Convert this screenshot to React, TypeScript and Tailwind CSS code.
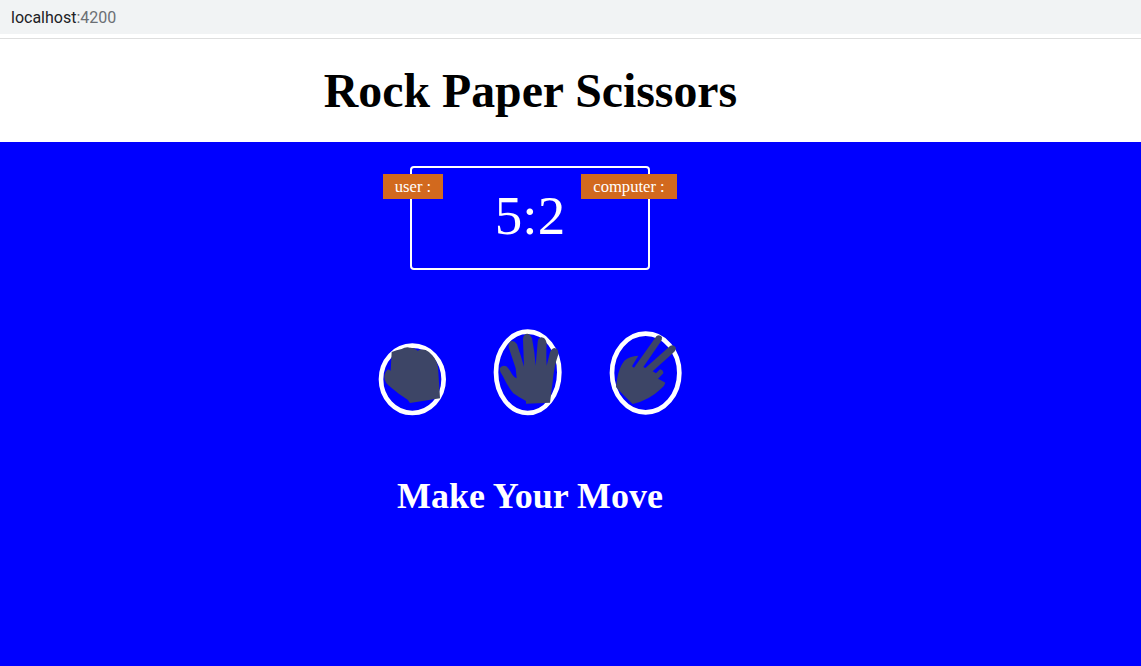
import React from 'react';

const serif = "font-['Liberation_Serif','Times_New_Roman',serif]";
const handColor = '#3d4566';

export default function App() {
  return (
    <div className={`h-[666px] w-[1141px] overflow-hidden bg-white flex flex-col ${serif}`}>
      {/* Browser address bar */}
      <div className="h-[34px] bg-[#f1f3f4] pl-[11px] flex items-center font-['Roboto',sans-serif] text-[16px] text-[#202124] pt-[2px]">
        localhost<span className="text-[#6b6f74]">:4200</span>
      </div>
      <div className="h-[5px] border-b-[1.5px] border-[#dedede] bg-white"></div>

      {/* Title */}
      <div className="h-[103px] w-[1061px] flex justify-center pt-[22px]">
        <h1 className="text-[47.8px] leading-[60px] font-bold text-black">Rock Paper Scissors</h1>
      </div>

      {/* Game */}
      <div className="flex-1 bg-[#0000ff] w-full">
        <div className="w-[1060px] flex flex-col items-center pt-[24px]">
          <div className="relative w-[240px] h-[104px] border-2 border-white rounded-[4px] flex justify-center text-white pt-[13px]">
            <span className="text-[55px] leading-[70px]">5:2</span>
            <div className="absolute left-[-29px] top-[6px] w-[60px] h-[25px] pt-[1px] bg-[#d2691e] flex items-center justify-center text-[16.6px]">user :</div>
            <div className="absolute right-[-29px] top-[6px] w-[96px] h-[25px] pt-[1px] bg-[#d2691e] flex items-center justify-center text-[16.6px]">computer :</div>
          </div>

          {/* Moves */}
          <div className="flex items-start gap-[40px] mt-[55px] ml-[1px]">
            <svg className="mt-[13px]" width="75" height="80" viewBox="0 0 225 240">
              <ellipse cx="112" cy="124" rx="94" ry="101" fill="none" stroke="#fff" strokeWidth="14" />
              <path
                d="M50 42 Q65 36 80 33 Q92 26 105 29 Q118 28 128 38 Q140 32 152 36 Q165 42 172 52 Q186 68 189 88 L195 181 L105 195 L98 185 Q70 168 50 150 Q28 135 28 118 Q29 100 40 94 L47 98 Z"
                fill={handColor}
              />
            </svg>
            <svg width="75" height="95" viewBox="0 0 225 285">
              <ellipse cx="113" cy="142" rx="95" ry="122" fill="none" stroke="#fff" strokeWidth="14" />
              <path
                d="M108 236 L180 233 L188 170 Q192 125 205 88 Q206 70 193 69 Q184 71 180 82 L170 122 Q168 85 170 55 Q167 37 154 37 Q144 39 143 52 L137 122 Q134 80 126 40 Q120 25 110 26 Q99 29 99 44 L102 125 Q92 90 81 58 Q72 45 62 49 Q53 55 57 70 L77 130 L80 160 Q72 158 66 148 Q58 132 49 124 Q36 119 29 130 Q29 142 38 152 Q52 182 70 205 Q88 218 108 228 Z"
                fill={handColor}
              />
            </svg>
            <svg className="mt-[3px] ml-[1px]" width="80" height="90" viewBox="0 0 240 270">
              <ellipse cx="119" cy="135" rx="101" ry="118" fill="none" stroke="#fff" strokeWidth="14" />
              <path
                d="M33 155 Q38 120 55 98 Q70 84 97 83 L78 115 L84 119 L151 25 Q160 18 168 27 Q169 36 163 43 L112 117 L118 120 L193 53 Q204 48 210 60 Q209 69 201 75 L140 130 L150 136 L162 124 Q172 126 172 136 L156 152 Q168 158 178 164 Q176 174 165 182 Q130 216 80 228 Q55 205 30 177 Z"
                fill={handColor}
              />
            </svg>
          </div>

          <h2 className="text-[36px] leading-[44px] font-bold text-white mt-[54px]">Make Your Move</h2>
        </div>
      </div>
    </div>
  );
}
